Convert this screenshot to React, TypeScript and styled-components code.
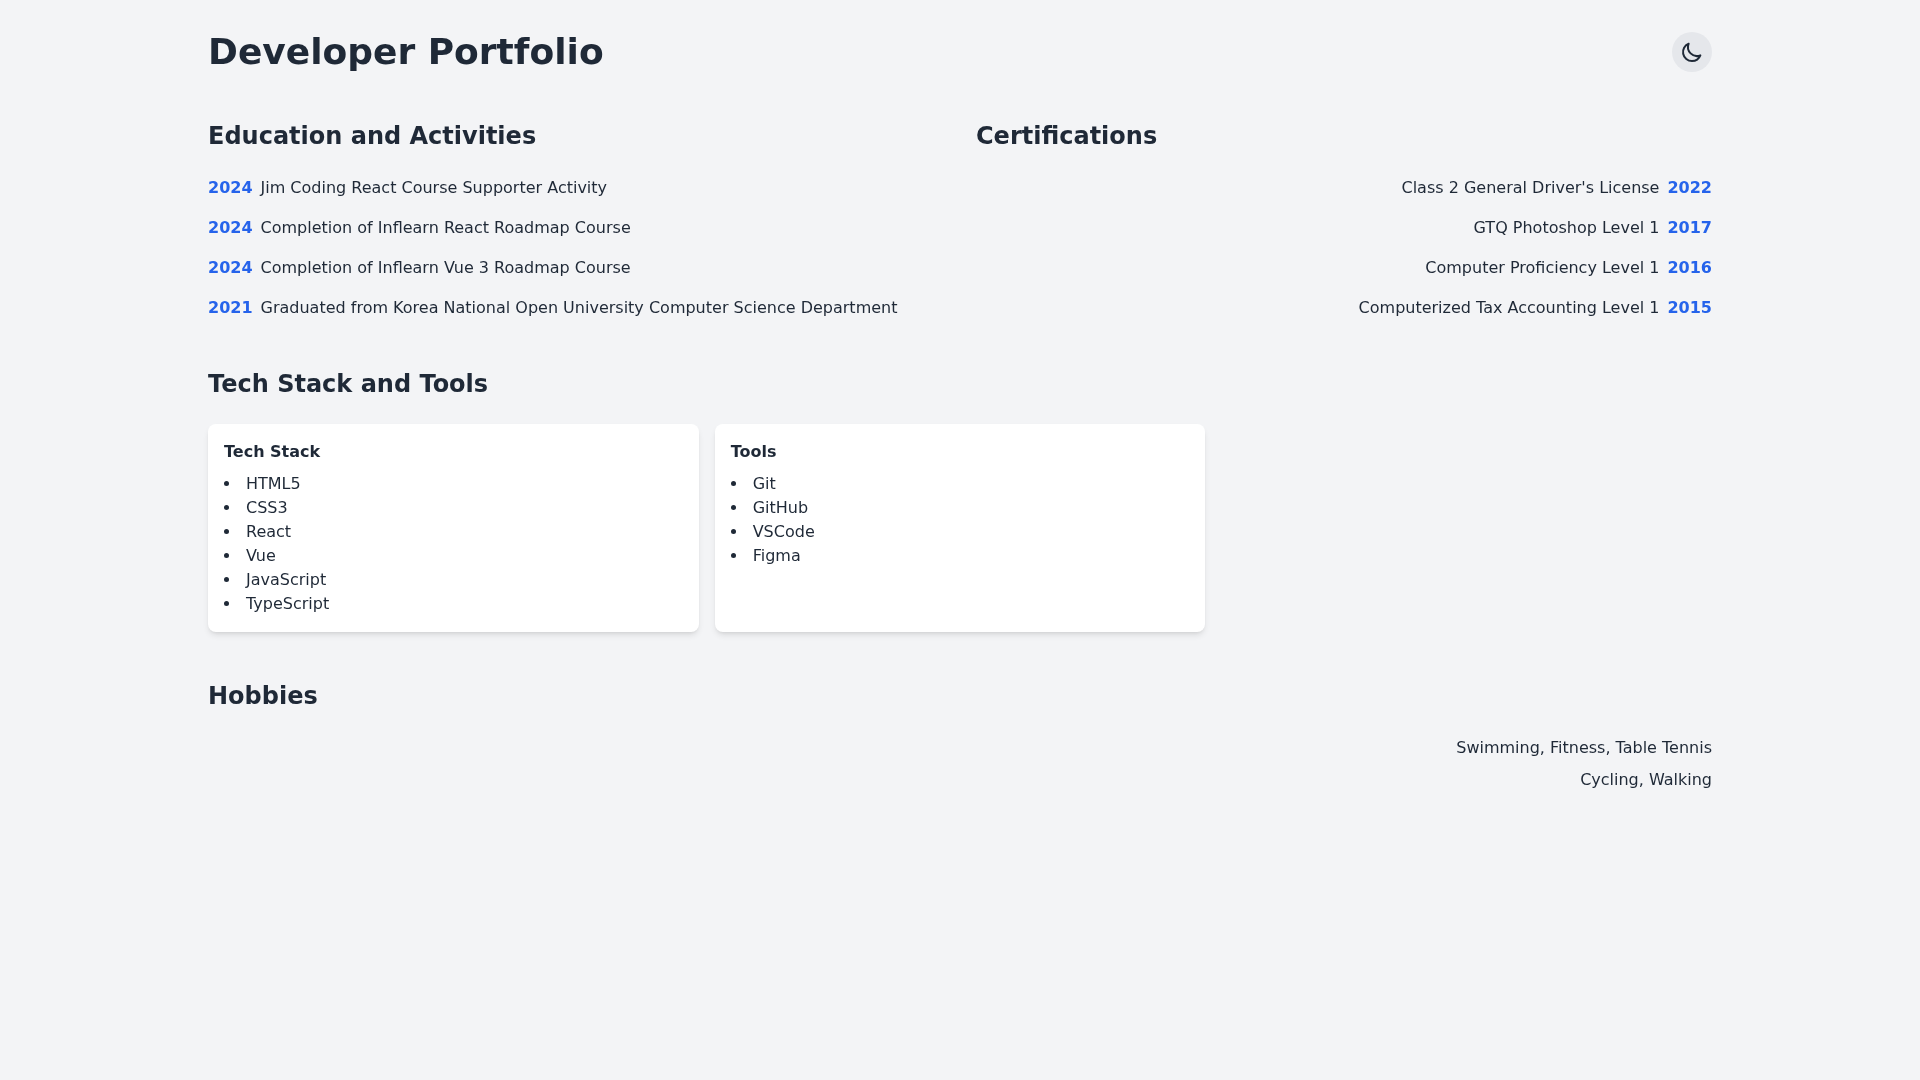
import { createGlobalStyle } from 'styled-components';
import styled from 'styled-components';

const education = [
  { year: 2024, text: 'Jim Coding React Course Supporter Activity' },
  { year: 2024, text: 'Completion of Inflearn React Roadmap Course' },
  { year: 2024, text: 'Completion of Inflearn Vue 3 Roadmap Course' },
  {
    year: 2021,
    text: 'Graduated from Korea National Open University Computer Science Department',
  },
];

const certifications = [
  { year: 2022, text: "Class 2 General Driver's License" },
  { year: 2017, text: 'GTQ Photoshop Level 1' },
  { year: 2016, text: 'Computer Proficiency Level 1' },
  { year: 2015, text: 'Computerized Tax Accounting Level 1' },
];

const techStack = ['HTML5', 'CSS3', 'React', 'Vue', 'JavaScript', 'TypeScript'];
const tools = ['Git', 'GitHub', 'VSCode', 'Figma'];
const hobbies = ['Swimming, Fitness, Table Tennis', 'Cycling, Walking'];

function MoonIcon() {
  return (
    <svg width="24" height="24" viewBox="0 0 24 24" fill="none" stroke="currentColor" strokeWidth="2" strokeLinecap="round" strokeLinejoin="round">
      <path d="M20.354 15.354A9 9 0 0 1 8.646 3.646 9.003 9.003 0 0 0 12 21a9.003 9.003 0 0 0 8.354-5.646z" />
    </svg>
  );
}

function App() {
  return (
    <>
      <GlobalStyle />
      <Page>
        <Header>
          <Title>Developer Portfolio</Title>
          <ThemeButton aria-label="Toggle theme">
            <MoonIcon />
          </ThemeButton>
        </Header>
        <Main>
          <TwoColumns>
            <section>
              <SectionTitle>Education and Activities</SectionTitle>
              <Rows>
                {education.map((item) => (
                  <Row key={item.text}>
                    <Year>{item.year}</Year>
                    <span>{item.text}</span>
                  </Row>
                ))}
              </Rows>
            </section>
            <section>
              <SectionTitle>Certifications</SectionTitle>
              <Rows>
                {certifications.map((item) => (
                  <Row key={item.text} $right>
                    <span>{item.text}</span>
                    <Year>{item.year}</Year>
                  </Row>
                ))}
              </Rows>
            </section>
          </TwoColumns>
          <section>
            <SectionTitle>Tech Stack and Tools</SectionTitle>
            <CardGrid>
              <Card>
                <CardTitle>Tech Stack</CardTitle>
                <CardList>
                  {techStack.map((name) => (
                    <li key={name}>{name}</li>
                  ))}
                </CardList>
              </Card>
              <Card>
                <CardTitle>Tools</CardTitle>
                <CardList>
                  {tools.map((name) => (
                    <li key={name}>{name}</li>
                  ))}
                </CardList>
              </Card>
            </CardGrid>
          </section>
          <section>
            <SectionTitle>Hobbies</SectionTitle>
            <HobbyList>
              {hobbies.map((line) => (
                <p key={line}>{line}</p>
              ))}
            </HobbyList>
          </section>
        </Main>
      </Page>
    </>
  );
}

const GlobalStyle = createGlobalStyle`
  * {
    box-sizing: border-box;
  }
  html, body {
    margin: 0;
    min-height: 100%;
    background: #f3f4f6;
  }
  body {
    font-family: "DejaVu Sans", sans-serif;
    font-size: 16px;
    line-height: 24px;
    color: #1f2937;
  }
`;

const Page = styled.div`
  width: 100%;
  max-width: 1536px;
  min-height: 1080px;
  margin: 0 auto;
  padding: 32px 16px;
  will-change: transform;
`;

const Header = styled.header`
  display: flex;
  align-items: center;
  justify-content: space-between;
  margin-bottom: 48px;
`;

const Title = styled.h1`
  margin: 0;
  font-size: 36px;
  line-height: 40px;
  font-weight: 700;
  color: #1f2937;
`;

const ThemeButton = styled.button`
  display: flex;
  align-items: center;
  justify-content: center;
  width: 40px;
  height: 40px;
  padding: 0;
  border: none;
  border-radius: 50%;
  background: #e5e7eb;
  color: #1f2937;
  cursor: pointer;
`;

const Main = styled.main`
  display: flex;
  flex-direction: column;
  gap: 48px;
`;

const TwoColumns = styled.div`
  display: grid;
  grid-template-columns: repeat(2, 1fr);
  gap: 32px;
`;

const SectionTitle = styled.h2`
  margin: 0 0 24px;
  font-size: 24px;
  line-height: 32px;
  font-weight: 600;
  color: #1f2937;
`;

const Rows = styled.ul`
  display: flex;
  flex-direction: column;
  gap: 16px;
  margin: 0;
  padding: 0;
  list-style: none;
`;

const Row = styled.li<{ $right?: boolean }>`
  display: flex;
  gap: 8px;
  justify-content: ${(props) => (props.$right ? 'flex-end' : 'flex-start')};
`;

const Year = styled.span`
  font-weight: 700;
  color: #2563eb;
`;

const CardGrid = styled.div`
  display: grid;
  grid-template-columns: repeat(3, 1fr);
  gap: 16px;
`;

const Card = styled.div`
  padding: 16px;
  border-radius: 8px;
  background: #ffffff;
  box-shadow: 0 4px 6px -1px rgba(0, 0, 0, 0.1), 0 2px 4px -2px rgba(0, 0, 0, 0.1);
`;

const CardTitle = styled.h3`
  margin: 0 0 8px;
  font-size: 16px;
  line-height: 24px;
  font-weight: 600;
  color: #1f2937;
`;

const CardList = styled.ul`
  margin: 0;
  padding: 0;
  list-style: disc inside;
`;

const HobbyList = styled.div`
  display: flex;
  flex-direction: column;
  gap: 8px;
  text-align: right;
  p {
    margin: 0;
  }
`;

export default App;
